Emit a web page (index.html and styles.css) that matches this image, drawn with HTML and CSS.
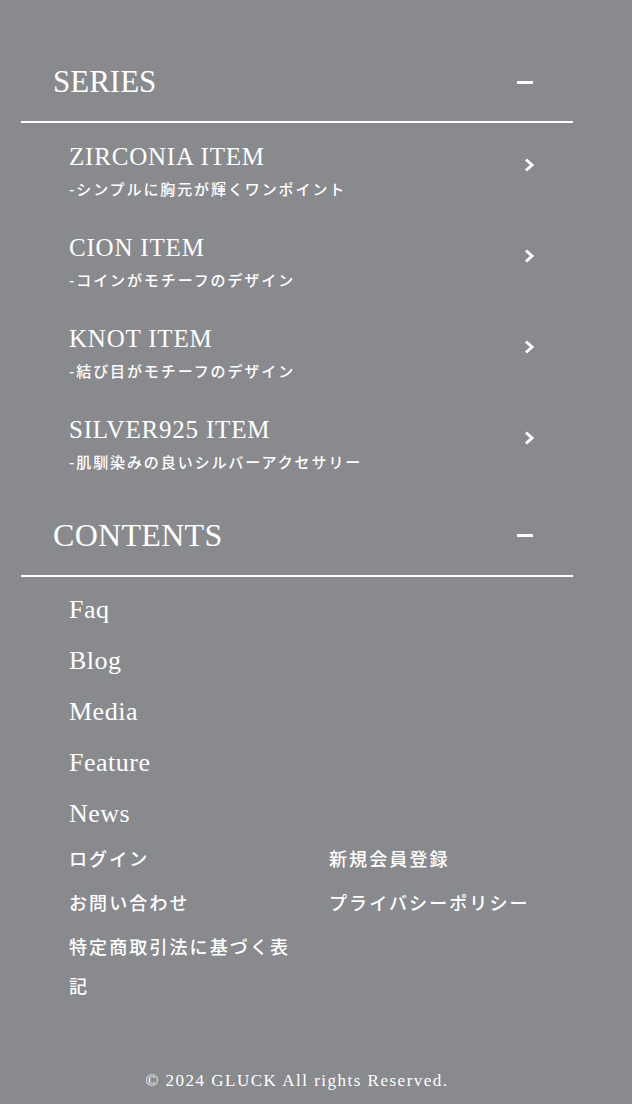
FILE: index.html
```html
<!DOCTYPE html>
<html lang="ja">
<head>
<meta charset="utf-8">
<title>GLUCK Menu</title>
<link rel="stylesheet" href="styles.css">
</head>
<body>
<nav class="menu">
  <section class="group">
    <div class="group-head head-series">
      <h2 class="group-title">SERIES</h2>
      <span class="minus"></span>
    </div>
    <ul class="series">
      <li class="series-item">
        <div class="series-text">
          <p class="series-name">ZIRCONIA ITEM</p>
          <p class="series-sub">-シンプルに胸元が輝くワンポイント</p>
        </div>
        <svg class="chev" viewBox="0 0 12 16" width="12" height="16"><polyline points="3,2.5 9,8 3,13.5" fill="none" stroke="#fff" stroke-width="3"/></svg>
      </li>
      <li class="series-item">
        <div class="series-text">
          <p class="series-name">CION ITEM</p>
          <p class="series-sub">-コインがモチーフのデザイン</p>
        </div>
        <svg class="chev" viewBox="0 0 12 16" width="12" height="16"><polyline points="3,2.5 9,8 3,13.5" fill="none" stroke="#fff" stroke-width="3"/></svg>
      </li>
      <li class="series-item">
        <div class="series-text">
          <p class="series-name">KNOT ITEM</p>
          <p class="series-sub">-結び目がモチーフのデザイン</p>
        </div>
        <svg class="chev" viewBox="0 0 12 16" width="12" height="16"><polyline points="3,2.5 9,8 3,13.5" fill="none" stroke="#fff" stroke-width="3"/></svg>
      </li>
      <li class="series-item">
        <div class="series-text">
          <p class="series-name">SILVER925 ITEM</p>
          <p class="series-sub">-肌馴染みの良いシルバーアクセサリー</p>
        </div>
        <svg class="chev" viewBox="0 0 12 16" width="12" height="16"><polyline points="3,2.5 9,8 3,13.5" fill="none" stroke="#fff" stroke-width="3"/></svg>
      </li>
    </ul>
  </section>
  <section class="group group-contents">
    <div class="group-head">
      <h2 class="group-title title-contents">CONTENTS</h2>
      <span class="minus"></span>
    </div>
    <ul class="links">
      <li>Faq</li>
      <li>Blog</li>
      <li>Media</li>
      <li>Feature</li>
      <li>News</li>
    </ul>
    <ul class="sublinks">
      <li>ログイン</li>
      <li>新規会員登録</li>
      <li>お問い合わせ</li>
      <li>プライバシーポリシー</li>
      <li>特定商取引法に基づく表記</li>
    </ul>
  </section>
  <p class="copy">© 2024 GLUCK All rights Reserved.</p>
</nav>
</body>
</html>
```

FILE: styles.css
```css
html, body {
  margin: 0;
  padding: 0;
  background: #898a8e;
}
body {
  color: #fff;
  font-family: "Liberation Serif", serif;
  min-height: 1104px;
}
p, ul, h2 { margin: 0; padding: 0; }
ul { list-style: none; }

.menu {
  width: 552px;
  margin-left: 21px;
  padding-top: 43px;
}

.group-head {
  height: 80px;
  display: flex;
  align-items: center;
  justify-content: space-between;
  padding: 0 40px 0 32px;
  border-bottom: 2px solid #fff;
}
.head-series {
  height: 78px;
}
.group-title {
  font-weight: 400;
  font-size: 31px;
  line-height: 40px;
}
.title-contents {
  font-size: 32px;
  letter-spacing: 0.3px;
}
.minus {
  display: block;
  width: 16px;
  height: 3px;
  background: #fff;
}

.series-item {
  height: 91px;
  box-sizing: border-box;
  padding: 19px 38px 0 48px;
  display: flex;
  justify-content: space-between;
  align-items: flex-start;
}
.series-name {
  font-size: 25px;
  line-height: 30px;
  letter-spacing: 0.8px;
}
.series-sub {
  margin-top: 2px;
  font-family: "Noto Sans CJK JP", "Noto Sans", sans-serif;
  font-weight: 500;
  font-size: 15px;
  line-height: 30px;
  letter-spacing: 1.9px;
}
.chev {
  margin-top: 15px;
  display: block;
}

.group-contents {
  margin-top: 8px;
}
.links {
  padding: 7px 0 0 48px;
}
.links li {
  font-size: 26px;
  line-height: 51px;
  letter-spacing: 0.5px;
}
.sublinks {
  display: grid;
  grid-template-columns: 230px 230px;
  column-gap: 30px;
  row-gap: 5px;
  padding-left: 48px;
  font-family: "Noto Sans CJK JP", "Noto Sans", sans-serif;
  font-weight: 500;
  font-size: 18px;
  line-height: 39px;
  letter-spacing: 2.1px;
}

.copy {
  margin-top: 64px;
  text-align: center;
  font-size: 17px;
  line-height: 24px;
  letter-spacing: 1.5px;
}
```
